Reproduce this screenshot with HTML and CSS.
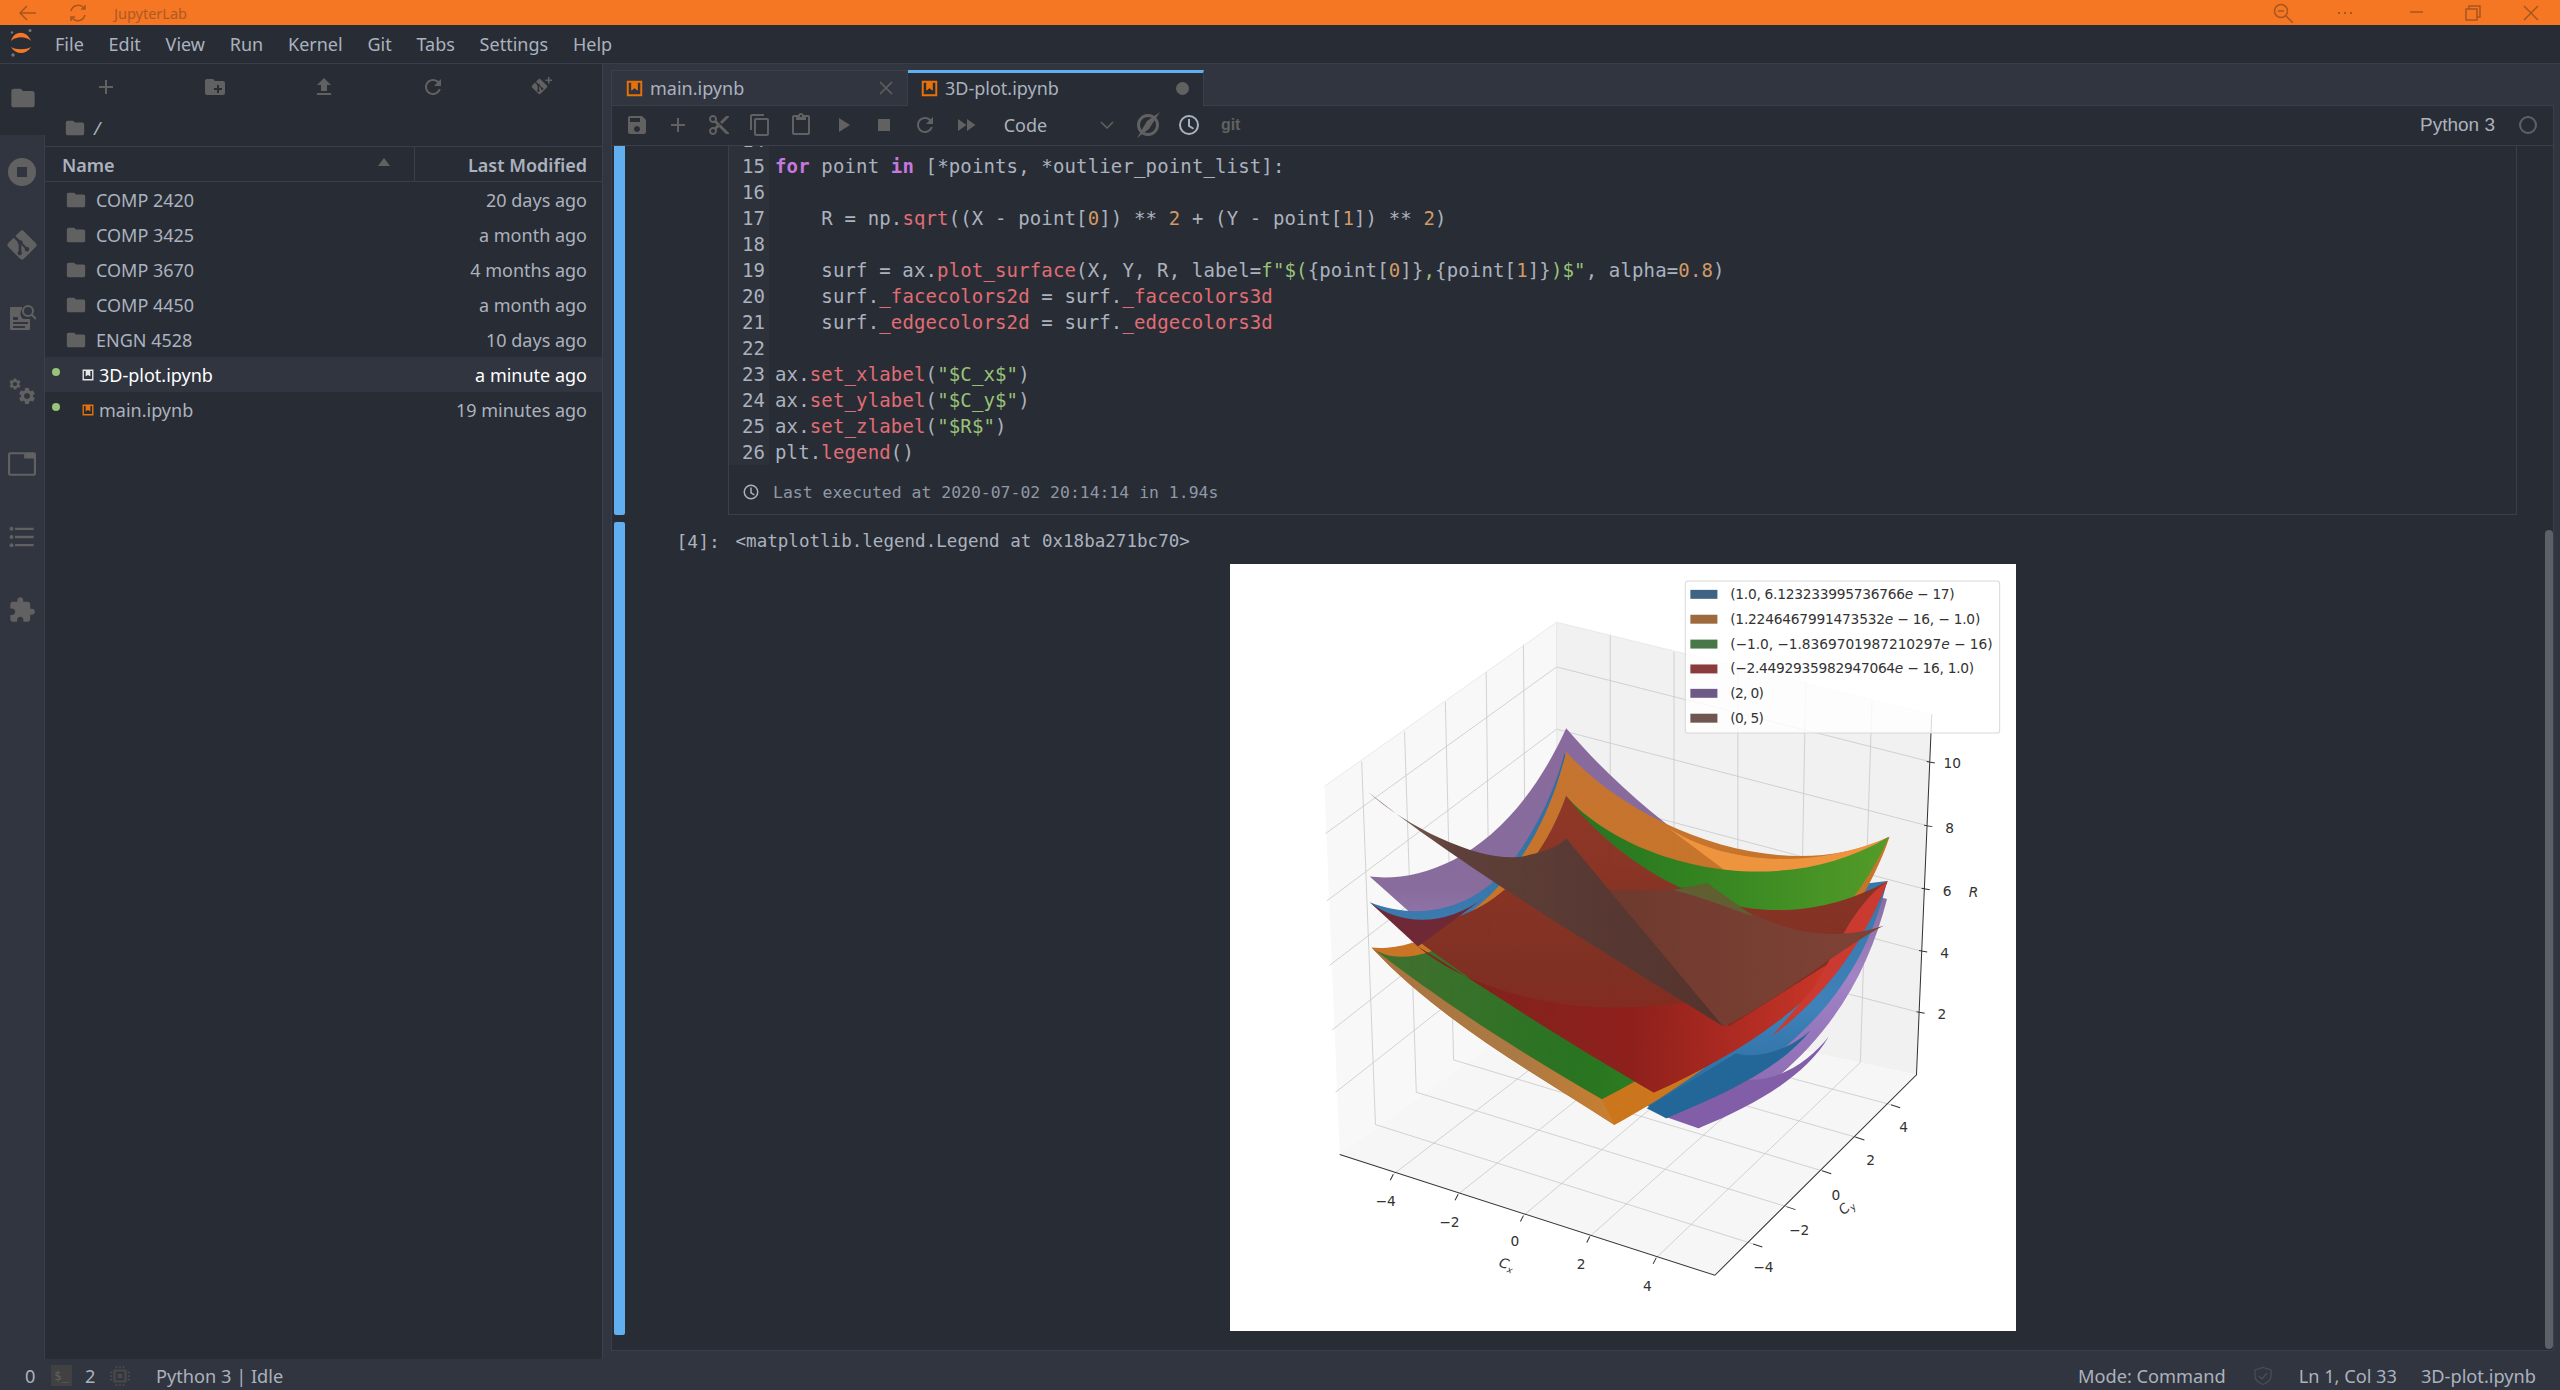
FILE: index.html
```html
<!DOCTYPE html>
<html lang="en">
<head>
    <meta charset="UTF-8">
    <title>JupyterLab</title>
    <link rel="stylesheet" href="styles.css">
</head>
<body>
    <svg class="defs" width="0" height="0">
        <symbol id="i-folder" viewBox="0 0 24 24"><path d="M10 4H4c-1.1 0-2 .9-2 2v12c0 1.1.9 2 2 2h16c1.1 0 2-.9 2-2V8c0-1.1-.9-2-2-2h-8l-2-2z"/></symbol>
        <symbol id="i-folder-add" viewBox="0 0 24 24"><path fill-rule="evenodd" d="M10 4H4c-1.1 0-2 .9-2 2v12c0 1.1.9 2 2 2h16c1.1 0 2-.9 2-2V8c0-1.1-.9-2-2-2h-8l-2-2zm4 6h2v3h3v2h-3v3h-2v-3h-3v-2h3z"/></symbol>
        <symbol id="i-upload" viewBox="0 0 24 24"><path d="M9 16h6v-6h4l-7-7-7 7h4zm-4 2h14v2H5z"/></symbol>
        <symbol id="i-refresh" viewBox="0 0 24 24"><path d="M17.65 6.35C16.2 4.9 14.21 4 12 4c-4.42 0-7.99 3.58-7.99 8s3.57 8 7.99 8c3.73 0 6.84-2.55 7.73-6h-2.08c-.82 2.33-3.04 4-5.65 4-3.31 0-6-2.69-6-6s2.69-6 6-6c1.66 0 3.14.69 4.22 1.78L13 11h7V4l-2.35 2.35z"/></symbol>
        <symbol id="i-add" viewBox="0 0 24 24"><path d="M19 13h-6v6h-2v-6H5v-2h6V5h2v6h6v2z"/></symbol>
        <symbol id="i-save" viewBox="0 0 24 24"><path d="M17 3H5c-1.11 0-2 .9-2 2v14c0 1.1.89 2 2 2h14c1.1 0 2-.9 2-2V7l-4-4zm-5 16c-1.66 0-3-1.34-3-3s1.34-3 3-3 3 1.34 3 3-1.34 3-3 3zm3-10H5V5h10v4z"/></symbol>
        <symbol id="i-cut" viewBox="0 0 24 24"><path d="M9.64 7.64c.23-.5.36-1.05.36-1.64 0-2.21-1.79-4-4-4S2 3.79 2 6s1.79 4 4 4c.59 0 1.14-.13 1.64-.36L10 12l-2.36 2.36C7.14 14.13 6.59 14 6 14c-2.21 0-4 1.79-4 4s1.79 4 4 4 4-1.79 4-4c0-.59-.13-1.14-.36-1.64L12 14l7 7h3v-1L9.64 7.64zM6 8c-1.1 0-2-.89-2-2s.9-2 2-2 2 .89 2 2-.9 2-2 2zm0 12c-1.1 0-2-.89-2-2s.9-2 2-2 2 .89 2 2-.9 2-2 2zm6-7.5c-.28 0-.5-.22-.5-.5s.22-.5.5-.5.5.22.5.5-.22.5-.5.5zM19 3l-6 6 2 2 7-7V3z"/></symbol>
        <symbol id="i-copy" viewBox="0 0 24 24"><path d="M16 1H4c-1.1 0-2 .9-2 2v14h2V3h12V1zm3 4H8c-1.1 0-2 .9-2 2v14c0 1.1.9 2 2 2h11c1.1 0 2-.9 2-2V7c0-1.1-.9-2-2-2zm0 16H8V7h11v14z"/></symbol>
        <symbol id="i-paste" viewBox="0 0 24 24"><path d="M19 2h-4.18C14.4.84 13.3 0 12 0c-1.3 0-2.4.84-2.82 2H5c-1.1 0-2 .9-2 2v16c0 1.1.9 2 2 2h14c1.1 0 2-.9 2-2V4c0-1.1-.9-2-2-2zm-7 0c.55 0 1 .45 1 1s-.45 1-1 1-1-.45-1-1 .45-1 1-1zm7 18H5V4h2v3h10V4h2v16z"/></symbol>
        <symbol id="i-run" viewBox="0 0 24 24"><path d="M8 5v14l11-7z"/></symbol>
        <symbol id="i-stop" viewBox="0 0 24 24"><path d="M6 6h12v12H6z"/></symbol>
        <symbol id="i-ff" viewBox="0 0 24 24"><path d="M4 18l8.5-6L4 6v12zm9-12v12l8.5-6L13 6z"/></symbol>
        <symbol id="i-gear" viewBox="0 0 24 24"><path d="M19.14 12.94c.04-.3.06-.61.06-.94 0-.32-.02-.64-.07-.94l2.03-1.58a.49.49 0 0 0 .12-.61l-1.92-3.32a.488.488 0 0 0-.59-.22l-2.39.96c-.5-.38-1.03-.7-1.62-.94l-.36-2.54a.484.484 0 0 0-.48-.41h-3.84c-.24 0-.43.17-.47.41l-.36 2.54c-.59.24-1.13.57-1.62.94l-2.39-.96c-.22-.08-.47 0-.59.22L2.74 8.87c-.12.21-.08.47.12.61l2.03 1.58c-.05.3-.09.63-.09.94s.02.64.07.94l-2.03 1.58a.49.49 0 0 0-.12.61l1.92 3.32c.12.22.37.29.59.22l2.39-.96c.5.38 1.03.7 1.62.94l.36 2.54c.05.24.24.41.48.41h3.84c.24 0 .44-.17.47-.41l.36-2.54c.59-.24 1.13-.56 1.62-.94l2.39.96c.22.08.47 0 .59-.22l1.92-3.32c.12-.22.07-.47-.12-.61l-2.01-1.58zM12 15.6c-1.98 0-3.6-1.62-3.6-3.6s1.62-3.6 3.6-3.6 3.6 1.62 3.6 3.6-1.62 3.6-3.6 3.6z"/></symbol>
        <symbol id="i-puzzle" viewBox="0 0 24 24"><path d="M20.5 11H19V7c0-1.1-.9-2-2-2h-4V3.5C13 2.12 11.88 1 10.5 1S8 2.12 8 3.5V5H4c-1.1 0-1.99.9-1.99 2v3.8H3.5c1.49 0 2.7 1.21 2.7 2.7s-1.21 2.7-2.7 2.7H2V20c0 1.1.9 2 2 2h3.8v-1.5c0-1.49 1.21-2.7 2.7-2.7 1.49 0 2.7 1.21 2.7 2.7V22H17c1.1 0 2-.9 2-2v-4h1.5c1.38 0 2.5-1.12 2.5-2.5S21.88 11 20.5 11z"/></symbol>
        <symbol id="i-git" viewBox="0 0 24 24"><path fill-rule="evenodd" d="M13.4 1.6l9 9c.8.8.8 2 0 2.8l-9 9c-.8.8-2 .8-2.8 0l-9-9c-.8-.8-.8-2 0-2.8L5.700 6.500l3 3c-.2.8.1 1.500.8 1.900v5.200c-.8.4-1.100 1.400-.7 2.200.5.900 1.500 1.200 2.400.7.800-.5 1-1.500.600-2.300l-.300-.400v-5l2.600 2.600c-.3.800 0 1.800.8 2.200.9.500 1.900.1 2.300-.7.500-.9.100-1.900-.7-2.300-.4-.2-.8-.2-1.200-.1l-2.800-2.800c.2-.8-.1-1.700-.8-2.100-.4-.2-.9-.3-1.300-.2L7 5.200l3.600-3.600c.8-.8 2-.8 2.800 0z"/></symbol>
        <symbol id="i-notebook" viewBox="0 0 22 22"><path fill-rule="evenodd" d="M1 1h20v20H1zm2.500 2.500v15h15v-15H15v10l-4-3-4 3v-10z"/><path class="nb-fill" d="M7 3.500h8v10l-4-3-4 3z"/></symbol>
        <symbol id="i-clock" viewBox="0 0 24 24"><path fill-rule="evenodd" d="M12 2a10 10 0 1 0 0 20 10 10 0 0 0 0-20zm0 2a8 8 0 1 1 0 16 8 8 0 0 1 0-16zM11 6h2v6.500l4 2.400-1 1.700-5-3z"/></symbol>
    </svg>

    <header class="titlebar">
        <svg class="win-ico back" viewBox="0 0 20 20"><path d="M18 10H2M9 3l-7 7 7 7"/></svg>
        <svg class="win-ico reload" viewBox="0 0 20 20"><path d="M3 8a7.500 7.500 0 0 1 13-3l1 1M17 12a7.500 7.500 0 0 1-13 3l-1-1M17 2v4h-4M3 18v-4h4"/></svg>
        <span class="app-title">JupyterLab</span>
        <div class="win-controls">
            <svg class="win-ico" viewBox="0 0 20 20"><circle cx="8" cy="8" r="6.500"/><path d="M5 8h6M13 13l7 7"/></svg>
            <svg class="win-ico" viewBox="0 0 20 20"><path class="dots" d="M3 10h2M9 10h2M15 10h2"/></svg>
            <svg class="win-ico" viewBox="0 0 20 20"><path d="M3 9h13"/></svg>
            <svg class="win-ico" viewBox="0 0 20 20"><path d="M3 6h11v11H3zM6 6V3h11v11h-3"/></svg>
            <svg class="win-ico" viewBox="0 0 20 20"><path d="M3 3l14 14M17 3L3 17"/></svg>
        </div>
    </header>

    <nav class="menubar">
        <div class="logo">
            <svg viewBox="0 0 24 30" width="24" height="30">
                <path class="logo-arc" d="M2 12C5 1 18 1 22 12 17 7 7 7 2 12zM2 18c5 8 15 8 20 0-5 3-15 3-20 0z"/>
                <circle class="logo-dot" cx="21" cy="1.500" r="1.500"/><circle class="logo-dot" cx="3" cy="3.500" r="1.200"/><circle class="logo-dot" cx="4" cy="26" r="1.700"/>
            </svg>
        </div>
        <span class="menu-item">File</span>
        <span class="menu-item">Edit</span>
        <span class="menu-item">View</span>
        <span class="menu-item">Run</span>
        <span class="menu-item">Kernel</span>
        <span class="menu-item">Git</span>
        <span class="menu-item">Tabs</span>
        <span class="menu-item">Settings</span>
        <span class="menu-item">Help</span>
    </nav>

    <div class="workspace">
        <aside class="sidebar">
            <div class="side-btn active"><svg class="ico s28"><use href="#i-folder"/></svg></div>
            <div class="side-btn"><svg viewBox="0 0 28 28" class="ico s28"><path fill-rule="evenodd" d="M14 0a14 14 0 1 0 0 28 14 14 0 0 0 0-28zM9 9h10v10H9z"/></svg></div>
            <div class="side-btn"><svg class="ico s32"><use href="#i-git"/></svg></div>
            <div class="side-btn"><svg viewBox="0 0 28 28" class="ico s28"><path fill-rule="evenodd" d="M3 3h11v2a7 7 0 0 0 1 10h7v10a1 1 0 0 1-1 1H3a1 1 0 0 1-1-1V4a1 1 0 0 1 1-1zm2 10v3h5v-3zm0 5v2h15v-2zm0 4v2h12v-2z"/><path class="ico-line" d="M20 2a5 5 0 1 0 0 10 5 5 0 0 0 0-10zM24 11l4 4"/></svg></div>
            <div class="side-btn"><svg viewBox="0 0 28 28" class="ico s28"><use href="#i-gear" x="0" y="0" width="14" height="14"/><use href="#i-gear" x="9" y="9" width="20" height="20"/></svg></div>
            <div class="side-btn"><svg viewBox="0 0 26 22" class="ico s28"><path fill-rule="evenodd" d="M2 0h22a2 2 0 0 1 2 2v18a2 2 0 0 1-2 2H2a2 2 0 0 1-2-2V2a2 2 0 0 1 2-2zm0 2v18h22V6H15V2z"/></svg></div>
            <div class="side-btn"><svg viewBox="0 0 24 20" class="ico s28"><circle cx="3" cy="3" r="1.700"/><circle cx="3" cy="10" r="1.700"/><circle cx="3" cy="17" r="1.700"/><path d="M6 2h16v2H6zM6 9h16v2H6zM6 16h16v2H6z"/></svg></div>
            <div class="side-btn"><svg class="ico s28"><use href="#i-puzzle"/></svg></div>
        </aside>

        <section class="filebrowser">
            <div class="fb-toolbar">
                <div class="fb-tool"><svg class="ico s24"><use href="#i-add"/></svg></div>
                <div class="fb-tool"><svg class="ico s24"><use href="#i-folder-add"/></svg></div>
                <div class="fb-tool"><svg class="ico s24"><use href="#i-upload"/></svg></div>
                <div class="fb-tool"><svg class="ico s24"><use href="#i-refresh"/></svg></div>
                <div class="fb-tool"><svg class="ico s24" viewBox="0 0 24 24"><use href="#i-git" x="1" y="3" width="17" height="17"/><path d="M18 2h1.500v2.500H22V6h-2.500v2.500H18V6h-2.500V4.500H18z"/></svg></div>
            </div>
            <div class="crumbs"><svg class="ico s22"><use href="#i-folder"/></svg><span>/</span></div>
            <div class="fb-header">
                <div class="col-name">Name <svg class="caret" viewBox="0 0 12 8"><path d="M6 0l6 8H0z"/></svg></div>
                <div class="col-date">Last Modified</div>
            </div>
            <div class="fb-row"><svg class="ico s22 row-ico"><use href="#i-folder"/></svg><span class="row-name">COMP 2420</span><span class="row-date">20 days ago</span></div>
            <div class="fb-row"><svg class="ico s22 row-ico"><use href="#i-folder"/></svg><span class="row-name">COMP 3425</span><span class="row-date">a month ago</span></div>
            <div class="fb-row"><svg class="ico s22 row-ico"><use href="#i-folder"/></svg><span class="row-name">COMP 3670</span><span class="row-date">4 months ago</span></div>
            <div class="fb-row"><svg class="ico s22 row-ico"><use href="#i-folder"/></svg><span class="row-name">COMP 4450</span><span class="row-date">a month ago</span></div>
            <div class="fb-row"><svg class="ico s22 row-ico"><use href="#i-folder"/></svg><span class="row-name">ENGN 4528</span><span class="row-date">10 days ago</span></div>
            <div class="fb-row nb selected"><i class="running"></i><svg class="nb-ico white"><use href="#i-notebook"/></svg><span class="row-name">3D-plot.ipynb</span><span class="row-date">a minute ago</span></div>
            <div class="fb-row nb"><i class="running"></i><svg class="nb-ico"><use href="#i-notebook"/></svg><span class="row-name">main.ipynb</span><span class="row-date">19 minutes ago</span></div>
        </section>

        <main class="dock">
            <div class="tabbar">
                <div class="tab">
                    <svg class="nb-ico"><use href="#i-notebook"/></svg>
                    <span class="tab-label">main.ipynb</span>
                    <svg class="tab-close" viewBox="0 0 14 14"><path d="M1 1l12 12M13 1L1 13"/></svg>
                </div>
                <div class="tab current">
                    <svg class="nb-ico"><use href="#i-notebook"/></svg>
                    <span class="tab-label">3D-plot.ipynb</span>
                    <i class="tab-dirty"></i>
                </div>
            </div>
            <div class="nb-toolbar">
                <div class="nb-tool"><svg class="ico s24"><use href="#i-save"/></svg></div>
                <div class="nb-tool"><svg class="ico s24"><use href="#i-add"/></svg></div>
                <div class="nb-tool"><svg class="ico s24"><use href="#i-cut"/></svg></div>
                <div class="nb-tool"><svg class="ico s24"><use href="#i-copy"/></svg></div>
                <div class="nb-tool"><svg class="ico s24"><use href="#i-paste"/></svg></div>
                <div class="nb-tool"><svg class="ico s24"><use href="#i-run"/></svg></div>
                <div class="nb-tool"><svg class="ico s24"><use href="#i-stop"/></svg></div>
                <div class="nb-tool"><svg class="ico s24"><use href="#i-refresh"/></svg></div>
                <div class="nb-tool"><svg class="ico s24"><use href="#i-ff"/></svg></div>
                <div class="cell-type">Code <svg class="chevron" viewBox="0 0 14 8"><path d="M1 1l6 6 6-6"/></svg></div>
                <div class="nb-tool"><svg class="ico s28" viewBox="0 0 28 28"><circle class="ico-line thick" cx="14" cy="14" r="9.500"/><path d="M26 1L13 10 3 27l12-9z"/></svg></div>
                <div class="nb-tool"><svg class="ico s24 bright"><use href="#i-clock"/></svg></div>
                <div class="nb-tool git-label">git</div>
                <div class="kernel-name">Python 3</div>
                <i class="kernel-status"></i>
            </div>

            <div class="notebook">
                <div class="cell code-cell">
                    <div class="collapser"></div>
                    <div class="editor">
                        <pre class="code"><span class="ln">14</span>
<span class="ln">15</span><span class="k">for</span> point <span class="k">in</span> [*points, *outlier_point_list]:
<span class="ln">16</span>
<span class="ln">17</span>    R = np.<span class="f">sqrt</span>((X - point[<span class="n">0</span>]) ** <span class="n">2</span> + (Y - point[<span class="n">1</span>]) ** <span class="n">2</span>)
<span class="ln">18</span>
<span class="ln">19</span>    surf = ax.<span class="f">plot_surface</span>(X, Y, R, label=<span class="s">f"$(</span>{point[<span class="n">0</span>]}<span class="s">,</span>{point[<span class="n">1</span>]}<span class="s">)$"</span>, alpha=<span class="n">0.8</span>)
<span class="ln">20</span>    surf.<span class="f">_facecolors2d</span> = surf.<span class="f">_facecolors3d</span>
<span class="ln">21</span>    surf.<span class="f">_edgecolors2d</span> = surf.<span class="f">_edgecolors3d</span>
<span class="ln">22</span>
<span class="ln">23</span>ax.<span class="f">set_xlabel</span>(<span class="s">"$C_x$"</span>)
<span class="ln">24</span>ax.<span class="f">set_ylabel</span>(<span class="s">"$C_y$"</span>)
<span class="ln">25</span>ax.<span class="f">set_zlabel</span>(<span class="s">"$R$"</span>)
<span class="ln">26</span>plt.<span class="f">legend</span>()</pre>
                        <div class="exec-time"><svg class="ico s18"><use href="#i-clock"/></svg>Last executed at 2020-07-02 20:14:14 in 1.94s</div>
                    </div>
                </div>
                <div class="cell output-cell">
                    <div class="collapser"></div>
                    <div class="output">
                        <div class="out-line"><span class="prompt">[4]:</span><span class="out-text">&lt;matplotlib.legend.Legend at 0x18ba271bc70&gt;</span></div>
                        <svg class="plot" viewBox="0 8 1540 1542" preserveAspectRatio="none">
                            <defs>
                                <linearGradient id="g-purple" x1="0" y1="0" x2="0" y2="1"><stop offset="0" stop-color="#86669c"/><stop offset=".4" stop-color="#84689a"/><stop offset=".62" stop-color="#a080c4"/><stop offset="1" stop-color="#8360ab"/></linearGradient>
                                <linearGradient id="g-blue" x1="0" y1="0" x2="0" y2="1"><stop offset="0" stop-color="#2b6798"/><stop offset=".7" stop-color="#3a7fb8"/><stop offset="1" stop-color="#1e6295"/></linearGradient>
                                <linearGradient id="g-orange" x1="0" y1="0" x2="0" y2="1"><stop offset="0" stop-color="#c4702c"/><stop offset="1" stop-color="#cb7214"/></linearGradient>
                                <linearGradient id="g-tan" x1="0" y1="0" x2="1" y2="0"><stop offset="0" stop-color="#a8703a"/><stop offset=".6" stop-color="#a9763f"/><stop offset="1" stop-color="#c97c2a"/></linearGradient>
                                <linearGradient id="g-green" x1="0" y1="0" x2="1" y2="0"><stop offset="0" stop-color="#3d6b2a"/><stop offset=".4" stop-color="#22701b"/><stop offset=".6" stop-color="#2b7e1a"/><stop offset="1" stop-color="#4f9a22"/></linearGradient>
                                <linearGradient id="g-red" x1="0" y1="0" x2="0" y2="1"><stop offset="0" stop-color="#8e3222"/><stop offset=".6" stop-color="#7c2a1c"/><stop offset="1" stop-color="#8a1b16"/></linearGradient>
                                <linearGradient id="g-redlow" x1="0" y1="0" x2="1" y2="0"><stop offset="0" stop-color="#7a1d16"/><stop offset=".5" stop-color="#8c1a15"/><stop offset=".8" stop-color="#b4281e"/><stop offset="1" stop-color="#d03422"/></linearGradient>
                                <linearGradient id="g-browndark" x1="0" y1="0" x2="1" y2="0"><stop offset="0" stop-color="#80655f"/><stop offset=".25" stop-color="#5a3a33"/><stop offset="1" stop-color="#4f2d27"/></linearGradient>
                                <linearGradient id="g-brownlight" x1="0" y1="0" x2="1" y2="0"><stop offset="0" stop-color="#6a3528"/><stop offset="1" stop-color="#7d3e30"/></linearGradient>
                            </defs>
                            <path class="pane-l" d="M185 455L640 125V880L215 1195Z"/>
                            <path class="pane-r" d="M640 125L1375 310L1345 1035L640 880Z"/>
                            <path class="pane-f" d="M215 1195L640 880L1345 1035L950 1438Z"/>
                            <path class="grid" d="M258 405L285 1135M342 345L365 1070M422 285L438 1005M502 225L510 950M575 170L580 900
                                M745 150V900M870 185L870 930M995 215L995 955M1128 245L1115 985M1258 280L1235 1010
                                M1370 405L640 215L187 550M1362 533L640 340L190 685M1355 660L640 465L195 815M1350 785L640 590L200 945M1345 908L640 720L207 1070
                                M285 1135L1025 1375M365 1070L1090 1300M438 1005L1160 1228M510 950L1225 1160M580 900L1295 1095
                                M320 1235L745 900M447 1275L870 930M575 1318L995 955M705 1360L1115 985M835 1403L1235 1010"/>
                            <path class="edge" d="M185 455L640 125L1375 310M640 125V880"/>
                            <path class="axis" d="M215 1195L950 1438L1345 1035L1375 310
                                M320 1235l-6 12M447 1275l-6 12M575 1318l-6 12M705 1360l-6 12M835 1403l-6 12
                                M1025 1375l18 6M1090 1300l18 6M1160 1228l18 6M1225 1160l18 6M1295 1095l18 6
                                M1365 405l16 3M1360 533l16 3M1355 660l16 3M1350 785l16 3M1345 908l16 3"/>
                            <!-- surfaces, painted back to front -->
                            <g class="surfaces" transform="translate(235.2 321.6) scale(.7 .67)">
                                <path fill="url(#g-purple)" d="M605 25C720 170 860 300 1000 400L1503 537C1440 800 1300 1050 975 1225L400 800L55 470C220 490 450 390 605 25Z"/>
                                <path class="purple-low" d="M880 1190L1085 1075C1190 1100 1290 1020 1340 950C1280 1060 1150 1150 975 1225Z"/>
                                <path fill="url(#g-blue)" d="M600 100C720 300 1000 560 1503 483C1440 780 1260 1020 885 1195L400 850L55 547C180 600 340 580 450 430C520 330 570 220 600 100Z"/>
                                <path class="blue-low" d="M830 1165L1080 1000C1140 1020 1230 990 1290 930C1200 1050 1050 1120 885 1195Z"/>
                                <path fill="url(#g-orange)" d="M605 95C780 310 1200 510 1510 350C1440 580 1200 950 740 1215C500 1050 250 900 60 683C200 700 500 560 605 95Z"/>
                                <path class="orange-hi" d="M880 315C1000 410 1250 470 1510 350L1440 420C1300 470 1120 480 1060 460Z"/>
                                <path fill="url(#g-tan)" d="M60 683C250 900 500 1050 740 1215L705 1138C500 1010 300 880 60 683Z"/>
                                <path fill="url(#g-green)" d="M605 228C760 420 1180 560 1508 350C1400 620 1100 920 705 1138C500 1010 300 880 60 683C180 780 470 620 605 228Z"/>
                                <path fill="url(#g-red)" d="M605 228C740 420 1100 720 1505 483C1420 720 1200 950 850 1118C600 960 300 770 55 547C190 680 480 600 605 228Z"/>
                                <path class="red-maroon" d="M55 547C130 610 260 630 380 530L190 680Z"/>
                                <path fill="url(#g-redlow)" d="M190 680C330 810 650 920 1030 830L1060 920L1400 690C1250 900 1050 1020 850 1118C600 960 400 820 190 680Z"/>
                                <path class="red-hi" d="M1505 483C1420 720 1290 860 1180 950L1300 800C1360 700 1400 560 1505 483Z"/>
                                <path fill="url(#g-brownlight)" d="M725 510C850 515 950 505 1000 490C1100 590 1300 690 1495 617C1380 680 1200 840 1045 920Z"/>
                                <path class="olive" d="M905 510L1000 490L1130 590C1050 560 980 530 905 510Z"/>
                                <path fill="url(#g-browndark)" d="M50 215C180 340 400 440 500 405C550 395 590 375 605 355L725 510L1045 920C700 690 300 430 50 215Z"/>
                            </g>
                            <g class="ticks">
                                <text x="305" y="1298" text-anchor="middle">−4</text><text x="430" y="1340" text-anchor="middle">−2</text><text x="558" y="1380" text-anchor="middle">0</text><text x="688" y="1425" text-anchor="middle">2</text><text x="818" y="1470" text-anchor="middle">4</text>
                                <text x="1320" y="1150" text-anchor="middle">4</text><text x="1255" y="1217" text-anchor="middle">2</text><text x="1187" y="1287" text-anchor="middle">0</text><text x="1115" y="1358" text-anchor="middle">−2</text><text x="1045" y="1432" text-anchor="middle">−4</text>
                                <text x="1415" y="418" text-anchor="middle">10</text><text x="1410" y="549" text-anchor="middle">8</text><text x="1405" y="675" text-anchor="middle">6</text><text x="1400" y="800" text-anchor="middle">4</text><text x="1395" y="922" text-anchor="middle">2</text>
                                <text class="math" x="1457" y="678" text-anchor="middle">R</text>
                                <text class="math" transform="translate(525 1420) rotate(18)">C<tspan class="sub" dy="6">x</tspan></text>
                                <text class="math" transform="translate(1203 1318) rotate(-45)">C<tspan class="sub" dy="6">y</tspan></text>
                            </g>
                            <rect class="legend-box" x="892" y="42" width="616" height="306" rx="6"/>
                            <rect class="lg lg1" x="902" y="60" width="53" height="18"/>
                            <rect class="lg lg2" x="902" y="110" width="53" height="18"/>
                            <rect class="lg lg3" x="902" y="160" width="53" height="18"/>
                            <rect class="lg lg4" x="902" y="210" width="53" height="18"/>
                            <rect class="lg lg5" x="902" y="259" width="53" height="18"/>
                            <rect class="lg lg6" x="902" y="309" width="53" height="18"/>
                            <g class="legend-text">
                                <text x="980" y="78" textLength="440">(1.0, 6.123233995736766<tspan class="math">e</tspan> − 17)</text>
                                <text x="980" y="128" textLength="490">(1.2246467991473532<tspan class="math">e</tspan> − 16, − 1.0)</text>
                                <text x="980" y="178" textLength="514">(−1.0, −1.8369701987210297<tspan class="math">e</tspan> − 16)</text>
                                <text x="980" y="228" textLength="478">(−2.4492935982947064<tspan class="math">e</tspan> − 16, 1.0)</text>
                                <text x="980" y="277" textLength="66">(2, 0)</text>
                                <text x="980" y="327" textLength="66">(0, 5)</text>
                            </g>
                        </svg>
                    </div>
                </div>
                <div class="scroll-thumb"></div>
            </div>
        </main>
    </div>

    <footer class="statusbar">
        <span class="st-num">0</span>
        <span class="term-badge">$_</span>
        <span class="st-num">2</span>
        <svg class="cpu" viewBox="0 0 20 20"><path fill-rule="evenodd" d="M4 4h12v12H4zm2 2v8h8V6zm2 2h4v4H8zM6 1h1.500v2H6zM9.300 1h1.500v2H9.300zM12.500 1H14v2h-1.500zM6 17h1.500v2H6zM9.300 17h1.500v2H9.300zM12.500 17H14v2h-1.500zM1 6h2v1.500H1zM1 9.300h2v1.500H1zM1 12.500h2V14H1zM17 6h2v1.500h-2zM17 9.300h2v1.500h-2zM17 12.500h2V14h-2z"/></svg>
        <span class="st-kernel">Python 3 | Idle</span>
        <span class="st-mode">Mode: Command</span>
        <svg class="shield" viewBox="0 0 20 20"><path d="M10 1.500L18 4v6c0 4-4 7-8 8.500C6 17 2 14 2 10V4zM6 10l3 3 5-6"/></svg>
        <span class="st-pos">Ln 1, Col 33</span>
        <span class="st-file">3D-plot.ipynb</span>
    </footer>
</body>
</html>
```

FILE: styles.css
```css
* {
    box-sizing: border-box;
}

html, body {
    margin: 0;
    height: 100%;
}

body {
    display: flex;
    flex-direction: column;
    height: 1390px;
    overflow: hidden;
    background-color: #282c34;
    color: #abb2bf;
    font-family: 'Noto Sans', sans-serif;
    font-size: 18px;
}

.defs {
    position: absolute;
}

/* generic icon sizes */
.ico {
    fill: #616161;
    flex: none;
}

.ico.bright {
    fill: #abb2bf;
}

.ico-line {
    fill: none;
    stroke: #616161;
    stroke-width: 2;
}

.ico-line.thick {
    stroke-width: 3;
}

.s18 { width: 18px; height: 18px; fill: #abb2bf; }
.s22 { width: 22px; height: 22px; }
.s24 { width: 24px; height: 24px; }
.s28 { width: 28px; height: 28px; }
.s32 { width: 32px; height: 32px; }

/* window title */
.titlebar {
    display: flex;
    align-items: center;
    height: 25px;
    flex: none;
    background-color: #f57623;
    color: #ae5a26;
    font-size: 14.500px;
    padding-left: 18px;
}

.win-ico {
    width: 20px;
    height: 20px;
    fill: none;
    stroke: #a8561f;
    stroke-width: 1.500;
    flex: none;
}

.win-ico .dots {
    stroke-width: 2;
}

.reload {
    margin-left: 30px;
}

.app-title {
    margin-left: 26px;
}

.win-controls {
    display: flex;
    align-items: center;
    margin-left: auto;
    padding-right: 19px;
}

.win-controls svg:nth-child(1) { margin-right: 42px; }
.win-controls svg:nth-child(2) { margin-right: 52px; }
.win-controls svg:nth-child(3) { margin-right: 36px; }
.win-controls svg:nth-child(4) { margin-right: 38px; }

/* menu */
.menubar {
    display: flex;
    align-items: center;
    height: 39px;
    flex: none;
    border-bottom: 1px solid #3a3f4b;
}

.logo {
    width: 42px;
    display: flex;
    justify-content: center;
}

.logo-arc { fill: #f37726; }
.logo-dot { fill: #767677; }

.menu-item {
    padding: 0 12.400px;
    color: #abb2bf;
}

.menu-item:first-of-type {
    padding-left: 13px;
}

/* main layout */
.workspace {
    display: flex;
    flex: 1;
    min-height: 0;
    background-color: #31353f;
}

.sidebar {
    width: 45px;
    flex: none;
    background-color: #31353f;
    border-right: 1px solid #3a3f4b;
    display: flex;
    flex-direction: column;
    align-items: stretch;
}

.side-btn {
    height: 73px;
    flex: none;
    display: flex;
    align-items: center;
    justify-content: center;
}

.side-btn.active {
    height: 71px;
    padding-bottom: 3px;
    background-color: #282c34;
    margin-right: -1px;
    position: relative;
}

/* file browser */
.filebrowser {
    width: 558px;
    flex: none;
    background-color: #282c34;
    border-right: 1px solid #3a3f4b;
}

.fb-toolbar {
    display: flex;
    height: 45px;
    padding-left: 6px;
}

.fb-tool {
    width: 109px;
    display: flex;
    align-items: center;
    justify-content: center;
}

.crumbs {
    display: flex;
    align-items: center;
    gap: 8px;
    height: 37px;
    padding-left: 19px;
    font-style: italic;
}

.fb-header {
    display: flex;
    height: 36px;
    border-top: 1px solid #3a3f4b;
    border-bottom: 1px solid #3a3f4b;
    font-weight: 600;
}

.col-name {
    width: 370px;
    padding-left: 17px;
    padding-top: 2px;
    display: flex;
    align-items: center;
    justify-content: space-between;
    border-right: 1px solid #3a3f4b;
}

.caret {
    width: 12px;
    height: 8px;
    fill: #616161;
    margin-right: 24px;
    margin-top: -6px;
}

.col-date {
    flex: 1;
    text-align: right;
    padding-right: 15px;
    line-height: 36px;
}

.fb-row {
    display: flex;
    align-items: center;
    height: 35px;
    padding: 0 15px 0 20px;
}

.row-ico {
    margin-right: 9px;
}

.row-date {
    margin-left: auto;
}

.fb-row.selected {
    background-color: #31353f;
    color: #fff;
}

.fb-row.nb {
    padding-left: 6px;
}

.running {
    width: 8px;
    height: 8px;
    border-radius: 50%;
    background-color: #98c379;
    margin-left: 1px;
    margin-right: 22px;
    margin-top: -6px;
}

.nb-ico {
    width: 12px;
    height: 12px;
    fill: #e8710a;
    flex: none;
    margin-right: 5px;
}

.nb-ico.white {
    fill: #e6e6e6;
}

.tab .nb-ico {
    width: 17px;
    height: 17px;
    margin-right: 7px;
}

/* notebook panel */
.dock {
    flex: 1;
    min-width: 0;
    margin-left: 8px;
    margin-right: 6px;
    margin-bottom: 8px;
    display: flex;
    flex-direction: column;
}

.tabbar {
    display: flex;
    align-items: flex-end;
    height: 42px;
    flex: none;
    border-bottom: 1px solid #3a3f4b;
}

.tab {
    display: flex;
    align-items: center;
    width: 297px;
    height: 35px;
    padding-left: 14px;
    padding-right: 14px;
    background-color: #31353f;
    border: 1px solid #3a3f4b;
    border-bottom: none;
}

.tab.current {
    width: 296px;
    height: 36px;
    margin-bottom: -1px;
    padding-bottom: 3px;
    background-color: #282c34;
    border: none;
    border-top: 3px solid #61afef;
    border-right: 1px solid #3a3f4b;
    padding-left: 13px;
}

.tab-close {
    width: 14px;
    height: 14px;
    margin-left: auto;
    stroke: #616161;
    stroke-width: 1.500;
    fill: none;
}

.tab-dirty {
    width: 13px;
    height: 13px;
    margin-left: auto;
    border-radius: 50%;
    background-color: #616161;
}

.nb-toolbar {
    display: flex;
    align-items: center;
    height: 40px;
    flex: none;
    padding-left: 4px;
    padding-right: 16px;
    padding-bottom: 1px;
    background-color: #282c34;
    border-left: 1px solid #3a3f4b;
    border-right: 1px solid #3a3f4b;
    border-bottom: 1px solid #3a3f4b;
}

.nb-tool {
    width: 41.200px;
    display: flex;
    justify-content: center;
    align-items: center;
}

.cell-type {
    display: flex;
    align-items: center;
    width: 141px;
    padding-left: 17px;
}

.chevron {
    width: 14px;
    height: 8px;
    margin-left: auto;
    margin-right: 14px;
    fill: none;
    stroke: #616161;
    stroke-width: 1.500;
}

.git-label {
    color: #616161;
    font-weight: 700;
    font-size: 16px;
    font-family: 'Liberation Sans', sans-serif;
}

.kernel-name {
    margin-left: auto;
    font-family: 'Liberation Sans', sans-serif;
    font-size: 19px;
    color: #abb2bf;
    margin-right: 24px;
}

.kernel-status {
    width: 18px;
    height: 18px;
    border: 2px solid #616161;
    border-radius: 50%;
}

.notebook {
    flex: 1;
    min-height: 0;
    overflow: hidden;
    position: relative;
    background-color: #282c34;
    border: 1px solid #3a3f4b;
    border-top: none;
    font-family: 'DejaVu Sans Mono', monospace;
}

.cell {
    display: flex;
    padding-left: 2px;
}

.code-cell {
    margin-top: -19px;
    height: 388px;
}

.output-cell {
    margin-top: 7px;
    height: 813px;
}

.collapser {
    width: 11px;
    flex: none;
    background-color: #61afef;
    border-radius: 2px;
}

.editor {
    width: 1789px;
    margin-left: 103px;
    border-left: 1px solid #3a3f4b;
    border-right: 1px solid #3a3f4b;
    border-bottom: 1px solid #3a3f4b;
    background-image: linear-gradient(#2c313a, #2c313a);
    background-size: 40px 338px;
    background-repeat: no-repeat;
}

.code {
    margin: 0;
    font: inherit;
    font-size: 19px;
    line-height: 26px;
    height: 344px;
    letter-spacing: 0.140px;
    color: #abb2bf;
}

.ln {
    display: inline-block;
    width: 40px;
    padding-left: 13px;
    margin-right: 6px;
    color: #abb2bf;
    letter-spacing: 0.070px;
}

.k { color: #c678dd; font-weight: 700; }
.f { color: #e06c75; }
.n { color: #d19a66; }
.s { color: #98c379; }

.exec-time {
    display: flex;
    align-items: center;
    gap: 13px;
    padding-left: 13px;
    height: 42px;
    font-size: 16.450px;
    color: #9098a5;
}

.output {
    flex: 1;
    min-width: 0;
}

.out-line {
    display: flex;
    align-items: center;
    height: 38px;
    margin-bottom: 4px;
    padding-left: 51.500px;
    font-size: 17.500px;
    color: #abb2bf;
}

.prompt {
    width: 59px;
    flex: none;
    font-size: 18px;
}

.out-text {
    letter-spacing: 0.030px;
}

.plot {
    display: block;
    width: 786px;
    height: 767px;
    margin-left: 605px;
    background-color: #fff;
    font-family: 'DejaVu Sans', sans-serif;
}

.pane-l { fill: #f8f8f8; }
.pane-r { fill: #f1f1f1; }
.pane-f { fill: #f6f6f6; }

.grid {
    fill: none;
    stroke: #c8c8c8;
    stroke-width: 1.600;
}

.edge {
    fill: none;
    stroke: #e4e4e4;
    stroke-width: 1.500;
}

.axis {
    fill: none;
    stroke: #333;
    stroke-width: 2;
}

.surfaces {
    opacity: 0.97;
}

.purple-low { fill: #7f5aa6; }
.blue-low { fill: #1d6396; }
.orange-hi { fill: #ef9239; }
.red-maroon { fill: #6a2230; }
.red-hi { fill: #c9352a; }
.olive { fill: #5d5a2c; }

.ticks text, .legend-text text {
    font-size: 27px;
    fill: #333;
}

.math {
    font-style: italic;
}

.sub {
    font-size: 18px;
}

.legend-box {
    fill: #fff;
    fill-opacity: 0.82;
    stroke: #d8d8d8;
    stroke-width: 2;
}

.lg1 { fill: #3f6383; }
.lg2 { fill: #9c6a3c; }
.lg3 { fill: #48774a; }
.lg4 { fill: #8b3a3d; }
.lg5 { fill: #6e5a86; }
.lg6 { fill: #6f5750; }

.scroll-thumb {
    position: absolute;
    right: 0;
    top: 384px;
    width: 8px;
    height: 819px;
    background-color: #5c6068;
    border-radius: 4px;
}

/* status bar */
.statusbar {
    display: flex;
    align-items: center;
    height: 31px;
    flex: none;
    background-color: #31353f;
    padding-left: 25px;
    padding-right: 24px;
    padding-top: 2px;
    color: #abb2bf;
    font-size: 18.200px;
}

.st-num {
    width: 10px;
}

.term-badge {
    width: 21px;
    height: 21px;
    margin: 0 13px 0 16px;
    background-color: #414141;
    color: #616161;
    font-family: 'DejaVu Sans Mono', monospace;
    font-size: 12px;
    line-height: 22px;
    text-align: center;
}

.cpu {
    width: 22px;
    height: 22px;
    fill: #4a4a4a;
    margin-left: 14px;
    flex: none;
}

.st-kernel {
    margin-left: 25px;
}

.st-mode {
    margin-left: auto;
}

.shield {
    width: 20px;
    height: 20px;
    margin: 0 26px 0 27px;
    fill: none;
    stroke: #4a4d55;
    stroke-width: 1.300;
}

.st-file {
    margin-left: 24px;
}
```
